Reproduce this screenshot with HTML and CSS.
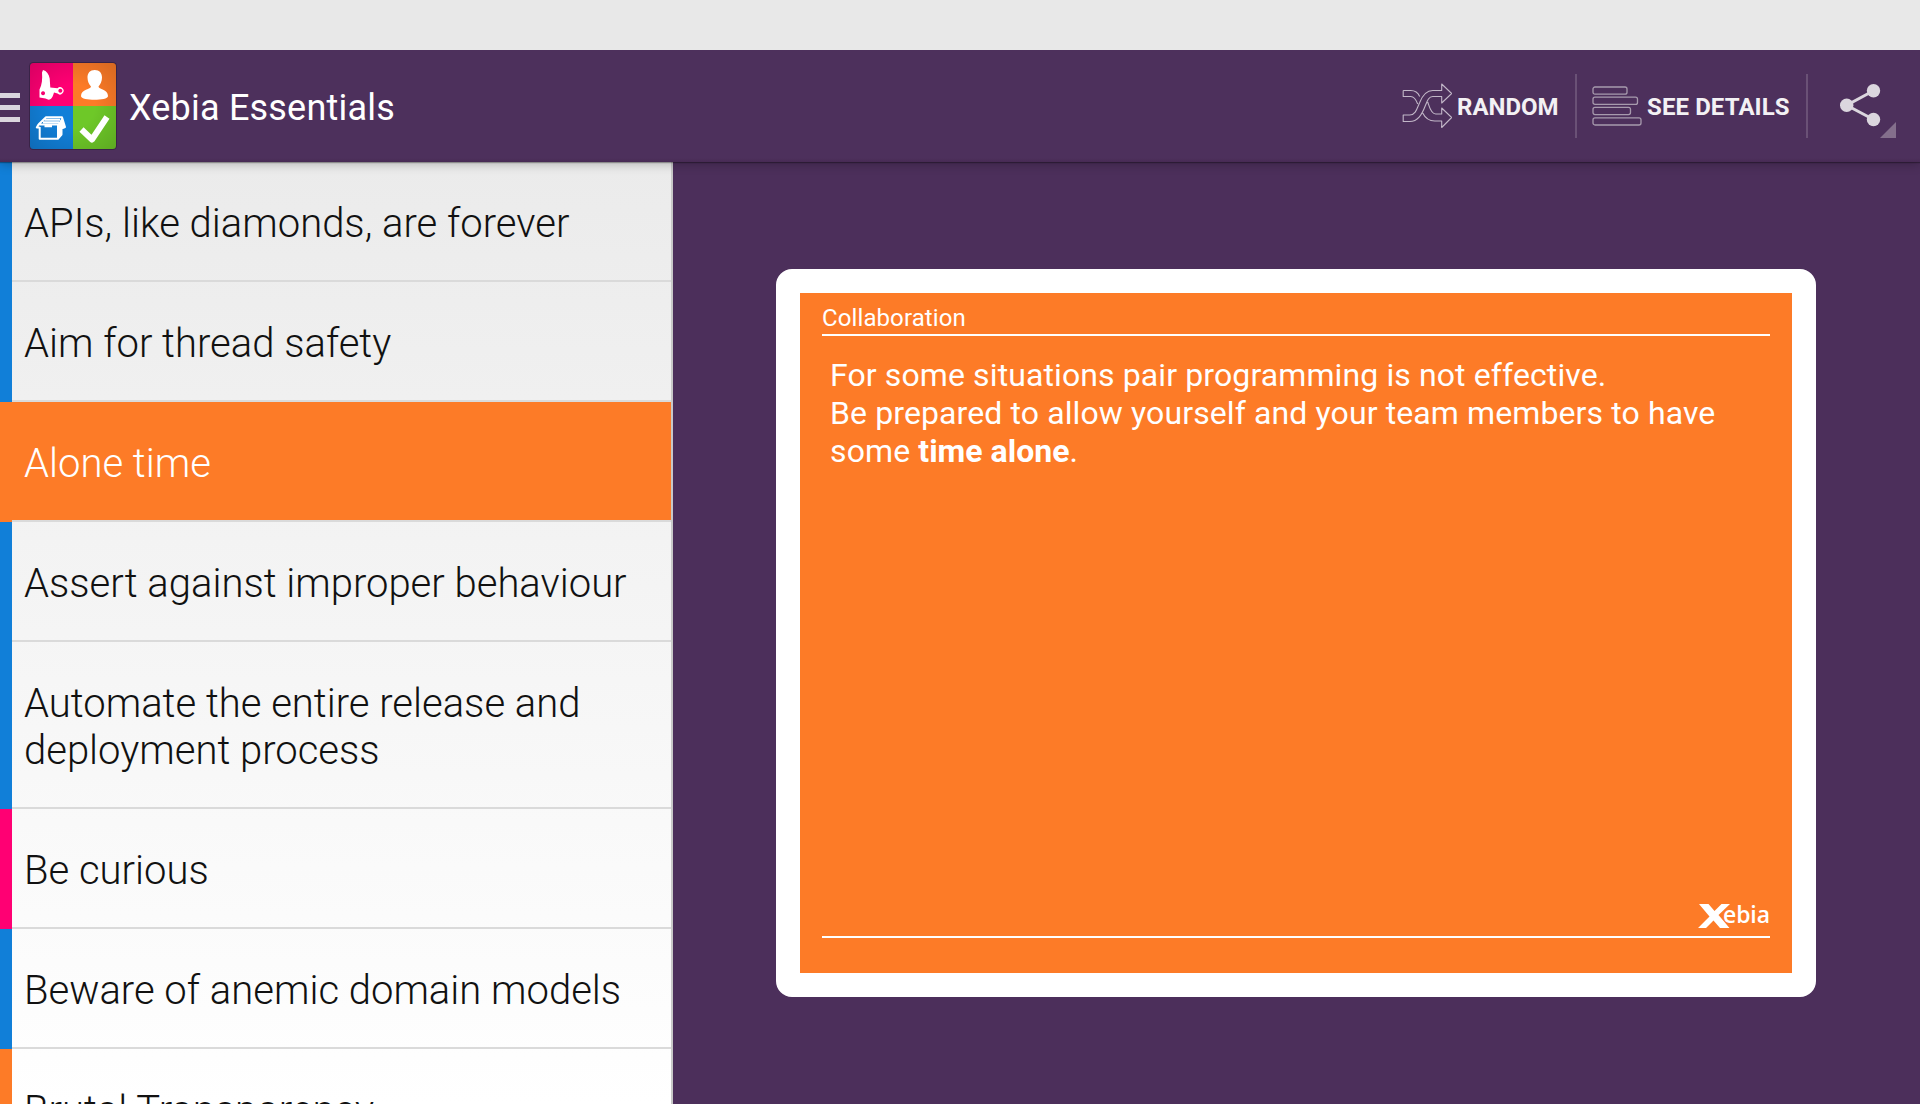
FILE: index.html
```html
<!DOCTYPE html>
<html lang="en">
<head>
<meta charset="utf-8">
<title>Xebia Essentials</title>
<link rel="stylesheet" href="styles.css">
</head>
<body>
<div class="status"></div>
<header class="bar">
  <svg class="drawer" width="20" height="30" viewBox="0 0 20 30"><path d="M0 0h20v5H0zM0 12h20v5H0zM0 24h20v5H0z" fill="#dbd6de"/></svg>
  <svg class="logo" width="92" height="92" viewBox="27 60 92 92">
    <defs>
      <clipPath id="tile"><rect x="30" y="63" width="86" height="86" rx="3.5"/></clipPath>
      <radialGradient id="shade" cx="73" cy="106" r="62" gradientUnits="userSpaceOnUse"><stop offset=".35" stop-color="#000" stop-opacity="0"/><stop offset="1" stop-color="#000" stop-opacity=".16"/></radialGradient>
    </defs>
    <rect x="29" y="62" width="88" height="88" rx="4.5" fill="#2d1a38" opacity=".6"/>
    <g clip-path="url(#tile)">
      <path fill="#ff0073" d="M30 63h43v43H30z"/><path fill="#fd7b27" d="M73 63h43v43H73z"/>
      <path fill="#117fd8" d="M30 106h43v43H30z"/><path fill="#6ec828" d="M73 106h43v43H73z"/>
      <path fill="url(#shade)" d="M30 63h86v86H30z"/>
    </g>
    <path fill="#fff" fill-rule="evenodd" d="M43 70C46.500 71 49 74 49.700 78.500L50.300 87.500 57.500 88.200A3.600 3.600 0 1 1 57.500 93.500L54 92.500C53 96 52 99.500 48.500 99.800L45.500 98.500 39.500 97.500V89.500C42 85 42.500 79 42 72.500ZM43 91.200a2 2 0 1 0 .1 0ZM60.300 88.700a2 2 0 1 0 .1 0Z"/>
    <path fill="#fff" d="M94.700 70C99.500 70 102 73 102 77.500 102 81.500 100.300 84.500 98.500 86.500 98.500 89.500 108 89 108 96 108 98.800 101 99.800 94.500 99.800S81 98.800 81 96C81 89 91 89.500 91 86.500 89 84.500 87.500 81.500 87.500 77.500 87.500 73 90 70 94.700 70Z"/>
    <g fill="none" stroke="#fff" stroke-width="2" stroke-linejoin="round"><path d="M39.700 127V138.700H58V124.500H38.500L36.800 127.500H39.700M38.500 124.500L46 117.200H62L65 127 61.500 128.500V134.500L58 138.700M44.500 119.700H60M43 122.200H59M44.500 126.200h7.500"/></g>
    <path fill="#fff" d="M57.500 124.500L62 117.500 65 127 61.500 128.500V134L57.500 139z"/>
    <path d="M81.500 129.500L92 139.500 107 117" fill="none" stroke="#fff" stroke-width="6" stroke-linejoin="round"/>
  </svg>
  <h1 class="title">Xebia Essentials</h1>
  <div class="actions">
    <button class="action random">
      <svg width="52" height="48" viewBox="-.7 0 52 48" fill="none" stroke="#c2b7c8" stroke-width="1.100" stroke-linejoin="round"><path d="M2.500 8.500H10C14 8.500 17.500 11 19 14.500M17 22C15.500 18 13.500 14.500 10 14.500H2.500V8.500M2.500 33H9C15 33 16.500 26 19 20.500 22 13 26 8.500 32 8.500H41V2L51 11.500 41 21V14.500H32C28 14.500 26.500 19 24.500 24 21 33 17 39.500 9 39.500H2.500ZM27 20C28.500 24 30 32 35 32H41V26L51 35.500 41 45.500V39H34C27 39 24 35 22 31"/></svg>
      <span>RANDOM</span>
    </button>
    <button class="action details">
      <svg width="50" height="40" viewBox="0 0 50 40" fill="none" stroke="#a79aad" stroke-width="1.300"><rect x="1" y="1" width="34" height="7.200" rx="2"/><rect x="1" y="11.200" width="44.500" height="7.200" rx="2"/><rect x="1" y="21.400" width="37.500" height="7.200" rx="2"/><rect x="1" y="31.800" width="48" height="7.200" rx="2"/></svg>
      <span>SEE DETAILS</span>
    </button>
    <button class="action share">
      <svg width="56" height="54" viewBox="0 0 56 54"><path d="M33.500 6.700L6.700 21.300 33.500 35.500" fill="none" stroke="#dbd6de" stroke-width="3"/><g fill="#dbd6de"><circle cx="33.500" cy="6.700" r="6.700"/><circle cx="6.700" cy="21.200" r="6.700"/><circle cx="33.500" cy="35.500" r="6.700"/></g><path d="M56 38v16H40z" fill="#846f8c"/></svg>
    </button>
  </div>
</header>
<main class="content">
  <ul class="list">
    <li class="row craft"><span>APIs, like diamonds, are forever</span></li>
    <li class="row craft"><span>Aim for thread safety</span></li>
    <li class="row people selected"><span>Alone time</span></li>
    <li class="row craft"><span>Assert against improper behaviour</span></li>
    <li class="row craft"><span>Automate the entire release and deployment process</span></li>
    <li class="row tools"><span>Be curious</span></li>
    <li class="row craft"><span>Beware of anemic domain models</span></li>
    <li class="row people"><span>Brutal Transparency</span></li>
  </ul>
  <section class="pane">
    <article class="card">
      <h2 class="category">Collaboration</h2>
      <p class="text">For some situations pair programming is not effective.<br>Be prepared to allow yourself and your team members to have some <b>time alone</b>.</p>
      <footer class="foot">
        <svg width="72" height="26" viewBox="0 0 72 26"><path fill="#fff" d="M1 1H10.500L16.500 8 23.500 1H32L20.500 12 31.500 25H22L15.500 17.500 8 25H0L11.500 13.500Z"/><text x="25" y="19.500" textLength="47">ebia</text></svg>
      </footer>
    </article>
  </section>
</main>
</body>
</html>
```
FILE: styles.css
```css
* { box-sizing: border-box; }
body {
  margin: 0;
  height: 1104px;
  display: flex;
  flex-direction: column;
  overflow: hidden;
  font-family: Roboto, sans-serif;
  background: #4c2f5b;
}
h1, h2, p, ul { margin: 0; padding: 0; font-weight: 400; }
.status { flex: none; height: 50px; background: #e8e8e8; z-index: 2; }
.bar {
  flex: none;
  height: 112px;
  display: flex;
  align-items: center;
  background: linear-gradient(#4d305c 108px, #472a54);
  box-shadow: 0 1px 1px rgba(0, 0, 0, .3), 0 2px 10px rgba(0, 0, 0, .25);
  z-index: 1;
}
.drawer { margin-top: 3px; }
.logo { margin-left: 7px; }
.title { margin: 4px 0 0 10px; font-size: 36px; line-height: 42px; letter-spacing: .2px; color: #fff; }
.actions { margin-left: auto; display: flex; height: 64px; }
.action {
  display: flex;
  align-items: center;
  padding: 0;
  border: 0;
  background: none;
  font: 700 24px/28px Roboto, sans-serif;
  color: #f3f1f4;
  white-space: nowrap;
}
.action span { padding-top: 2px; }
.random { width: 175px; }
.random span { margin-left: 5px; }
.details { width: 231px; padding-left: 15px; border-left: 2px solid #6a5176; }
.details span { margin-left: 5px; letter-spacing: .1px; }
.share { width: 114px; padding: 10px 0 0 32px; border-left: 2px solid #6a5176; }
.content { flex: 1; min-height: 0; display: flex; }
.list {
  width: 673px;
  flex: none;
  overflow: hidden;
  list-style: none;
  border-right: 2px solid #c8c8c8;
  background: linear-gradient(#ebebeb, #fff);
}
.row {
  padding-left: 12px;
  background: linear-gradient(var(--mark), var(--mark)) 0 0 / 12px 100% no-repeat;
}
.row span {
  display: block;
  padding: 38px 12px 33px;
  border-bottom: 2px solid #dadada;
  font-size: 40px;
  font-weight: 300;
  line-height: 47px;
  color: #111;
}
.row.craft { --mark: #117fd8; }
.row.people { --mark: #fd7b27; }
.row.tools { --mark: #ff0073; }
.row.selected span { background: #fd7b27; color: #fff; }
.pane { flex: 1; display: flex; justify-content: center; align-items: center; }
.card {
  width: 1040px;
  height: 728px;
  margin-right: 1px;
  border: 24px solid #fff;
  border-radius: 16px;
  background: #fd7b27;
  padding: 9px 22px 35px;
  display: flex;
  flex-direction: column;
  color: #fff;
}
.category { height: 34px; border-bottom: 2px solid #fff; font-size: 24px; line-height: 32px; letter-spacing: .1px; }
.text { padding: 20px 8px 0; font-size: 32px; line-height: 38px; letter-spacing: .11px; }
.text b { letter-spacing: 0; }
.foot { margin-top: auto; display: flex; justify-content: flex-end; padding-bottom: 7px; border-bottom: 2px solid #fff; }
.foot svg { overflow: visible; }
.foot text { font: 600 23px "Open Sans", sans-serif; fill: #fff; }
```
